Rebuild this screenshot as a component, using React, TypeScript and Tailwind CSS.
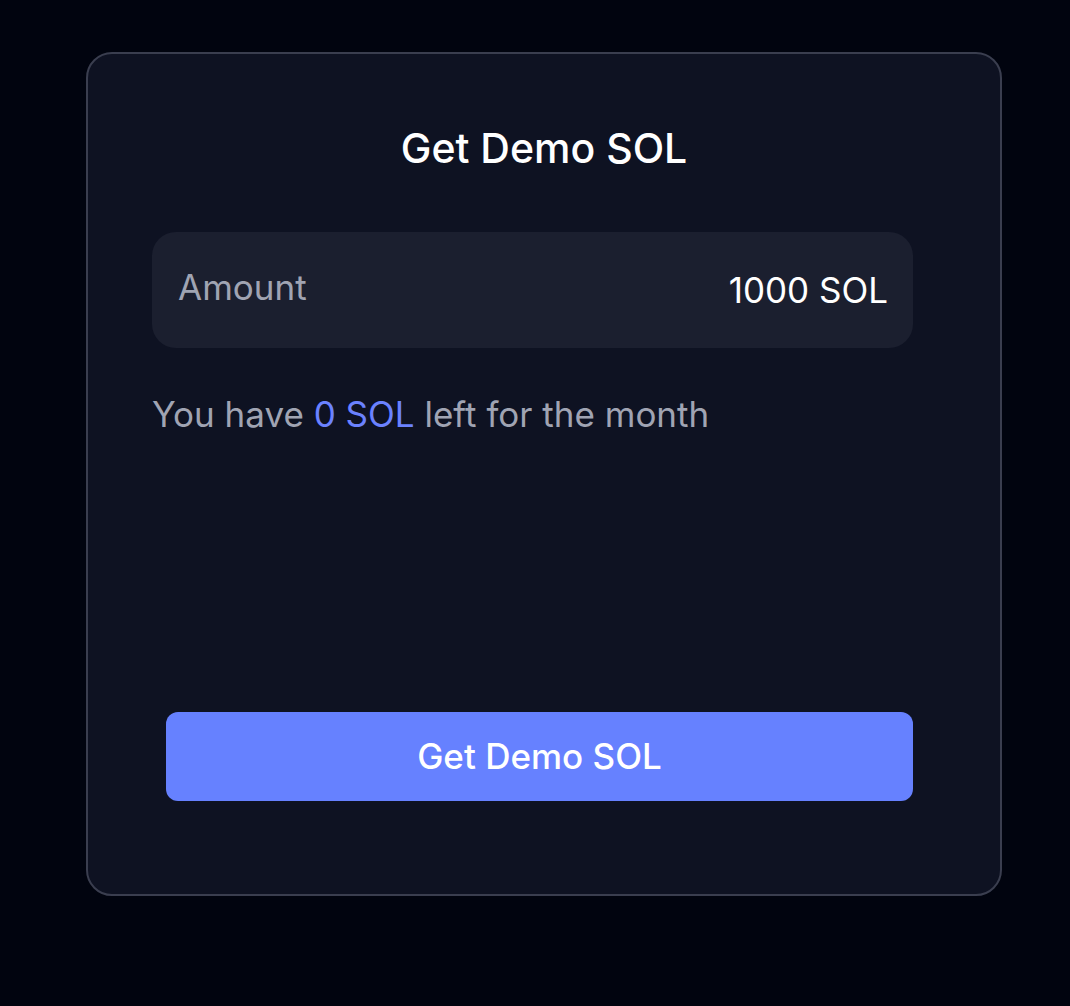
export default function App() {
  return (
    <main className="min-h-[1006px] w-full bg-[#01040f] pt-[52px] font-['Inter',sans-serif]">
      <section className="ml-[86px] flex h-[844px] w-[916px] flex-col rounded-[26px] border-2 border-[#3a3e4f] bg-[#0e1222]">
        <h1 className="mt-[70px] text-center text-[41px] leading-[48px] font-medium text-white">
          Get Demo SOL
        </h1>
        <div className="ml-[64px] mr-[87px] flex flex-1 flex-col">
          <div className="mt-[60px] flex h-[116px] items-center justify-between rounded-[24px] bg-[#1b1f2f] pl-[26px] pr-[25px]">
            <span className="mb-[6px] text-[35px] leading-[40px] text-[#a0a4b3]">Amount</span>
            <span className="text-[35px] leading-[40px] text-white">1000 SOL</span>
          </div>
          <p className="mt-[46px] text-[35px] leading-[40px] text-[#a0a4b3]">
            You have <span className="text-[#6b82ff]">0 SOL</span> left for the month
          </p>
          <button className="mt-auto mb-[93px] ml-[14px] h-[89px] rounded-[12px] bg-[#6681ff] text-[35px] font-medium text-white">
            Get Demo SOL
          </button>
        </div>
      </section>
    </main>
  );
}
